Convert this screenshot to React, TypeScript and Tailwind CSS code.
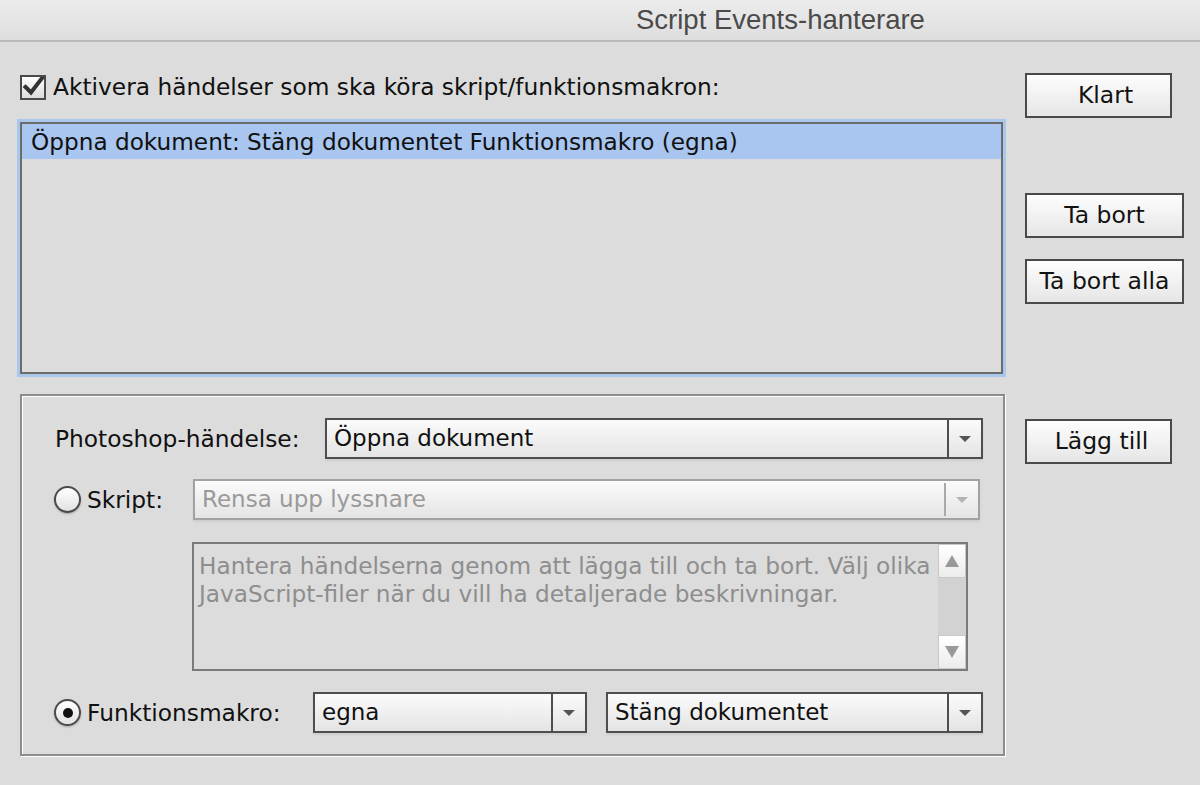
import React from 'react';

const ui = "font-['DejaVu_Sans',Verdana,sans-serif]";

function Arrow({ disabled }: { disabled?: boolean }) {
  return (
    <svg width="12" height="8" viewBox="0 0 12 8">
      <path d="M0 1 H12 L6 7 Z" fill={disabled ? '#b4b4b4' : '#555'} />
    </svg>
  );
}

function Select({ value, className = '', disabled }: { value: string; className?: string; disabled?: boolean }) {
  return (
    <div
      className={`flex h-[41px] items-stretch border-2 bg-gradient-to-b from-[#fbfbfb] to-[#e4e4e4] shadow-[0_2px_2px_rgba(0,0,0,0.06)] ${
        disabled ? 'border-[#a2a2a2]' : 'border-[#4e4e4e]'
      } ${className}`}
    >
      <div className={`flex flex-1 items-center truncate pl-[7px] text-[23px] leading-none ${disabled ? 'text-[#9a9a9a]' : 'text-[#111]'}`}>
        {value}
      </div>
      <div className={`flex w-[34px] items-center justify-center border-l-2 ${disabled ? 'my-[2px] border-[#a8a8a8]' : 'border-[#4e4e4e]'}`}>
        <Arrow disabled={disabled} />
      </div>
    </div>
  );
}

function Button({ label, className = '' }: { label: string; className?: string }) {
  return (
    <button className={`flex h-[45px] items-center justify-center border-2 border-[#4a4a4a] bg-gradient-to-b from-[#fdfdfd] to-[#e6e6e6] text-[23.5px] leading-none text-[#111] ${className}`}>
      {label}
    </button>
  );
}

function Radio({ checked }: { checked?: boolean }) {
  return (
    <div className="flex h-[27px] w-[27px] shrink-0 items-center justify-center rounded-full border-2 border-[#4a4a4a] bg-gradient-to-b from-white to-[#e2e2e2] shadow-[0_1px_2px_rgba(0,0,0,0.25)]">
      {checked && <div className="h-[10px] w-[10px] rounded-full bg-[#111]" />}
    </div>
  );
}

export default function App() {
  return (
    <div className={`h-[785px] w-[1200px] overflow-hidden bg-[#dcdcdc] ${ui}`}>
      {/* title bar */}
      <div className="flex h-[42px] items-center border-b-2 border-[#b9b9b9] bg-gradient-to-b from-[#ececec] to-[#dedede] pl-[636px] font-['Liberation_Sans',Arial,sans-serif] text-[27.5px] leading-none text-[#4a4a4a]">
        Script Events-hanterare
      </div>

      <div className="flex">
        {/* left column */}
        <div className="ml-[17px] w-[989px]">
          <div className="mt-[31px] flex h-[28px] items-center">
            <div className="ml-[3px] flex h-[25px] w-[26px] items-center justify-center border-2 border-[#4a4a4a] bg-gradient-to-b from-white to-[#dcdcdc]">
              <svg width="22" height="20" viewBox="0 0 22 20">
                <path d="M3.5 10 L9 15.5 L20.5 0.5" fill="none" stroke="#333" strokeWidth="4" strokeLinecap="square" />
              </svg>
            </div>
            <span className="ml-[7px] text-[23.3px] leading-none text-[#111]">Aktivera händelser som ska köra skript/funktionsmakron:</span>
          </div>

          {/* list */}
          <div className="mt-[18px] h-[258px] border-[3px] border-[#a9c8ec]">
            <div className="h-full border-2 border-[#6b6b6b] bg-[#dcdcdc]">
              <div className="flex h-[35px] items-center bg-[#a8c6ef] pl-[9px] text-[23.2px] leading-none text-[#111]">
                Öppna dokument: Stäng dokumentet Funktionsmakro (egna)
              </div>
            </div>
          </div>

          {/* settings panel */}
          <div className="ml-[3px] mt-[17px] h-[362px] w-[985px] border-2 border-[#8c8c8c] shadow-[inset_1px_1px_0_#fff,1px_1px_0_#fff]">
            <div className="flex items-center pl-[33px] pt-[22px]">
              <span className="w-[270px] text-[23.3px] leading-none text-[#111]">Photoshop-händelse:</span>
              <Select value="Öppna dokument" className="w-[658px]" />
            </div>

            <div className="mt-[20px] flex items-center pl-[32px]">
              <Radio />
              <span className="ml-[6px] w-[106px] text-[23.3px] leading-none text-[#111]">Skript:</span>
              <Select value="Rensa upp lyssnare" className="w-[787px]" disabled />
            </div>

            <div className="ml-[170px] mt-[22px] flex h-[129px] w-[776px] border-2 border-[#7a7a7a]">
              <div className="flex-1 pl-[5px] pt-[8px] text-[23.2px] leading-[28px] text-[#8e8e8e]">
                Hantera händelserna genom att lägga till och ta bort. Välj olika JavaScript-filer när du vill ha detaljerade beskrivningar.
              </div>
              <div className="flex w-[28px] flex-col bg-[#d2d2d2]">
                <div className="flex h-[34px] items-center justify-center border border-[#c8c8c8] bg-gradient-to-b from-white to-[#ececec]">
                  <svg width="14" height="12" viewBox="0 0 14 12"><path d="M7 0 L14 12 H0 Z" fill="#999" /></svg>
                </div>
                <div className="flex-1" />
                <div className="flex h-[34px] items-center justify-center border border-[#c8c8c8] bg-gradient-to-b from-white to-[#ececec]">
                  <svg width="14" height="12" viewBox="0 0 14 12"><path d="M0 0 H14 L7 12 Z" fill="#999" /></svg>
                </div>
              </div>
            </div>

            <div className="mt-[21px] flex items-center pl-[32px]">
              <Radio checked />
              <span className="ml-[6px] w-[226px] text-[23.3px] leading-none text-[#111]">Funktionsmakro:</span>
              <Select value="egna" className="w-[274px]" />
              <Select value="Stäng dokumentet" className="ml-[19px] w-[377px]" />
            </div>
          </div>
        </div>

        {/* right column */}
        <div className="ml-[19px] flex flex-col items-start">
          <Button label="Klart" className="mt-[31px] w-[147px] pl-[14px]" />
          <Button label="Ta bort" className="mt-[75px] w-[159px]" />
          <Button label="Ta bort alla" className="mt-[21px] w-[159px]" />
          <Button label="Lägg till" className="mt-[115px] w-[147px] pl-[6px]" />
        </div>
      </div>
    </div>
  );
}
